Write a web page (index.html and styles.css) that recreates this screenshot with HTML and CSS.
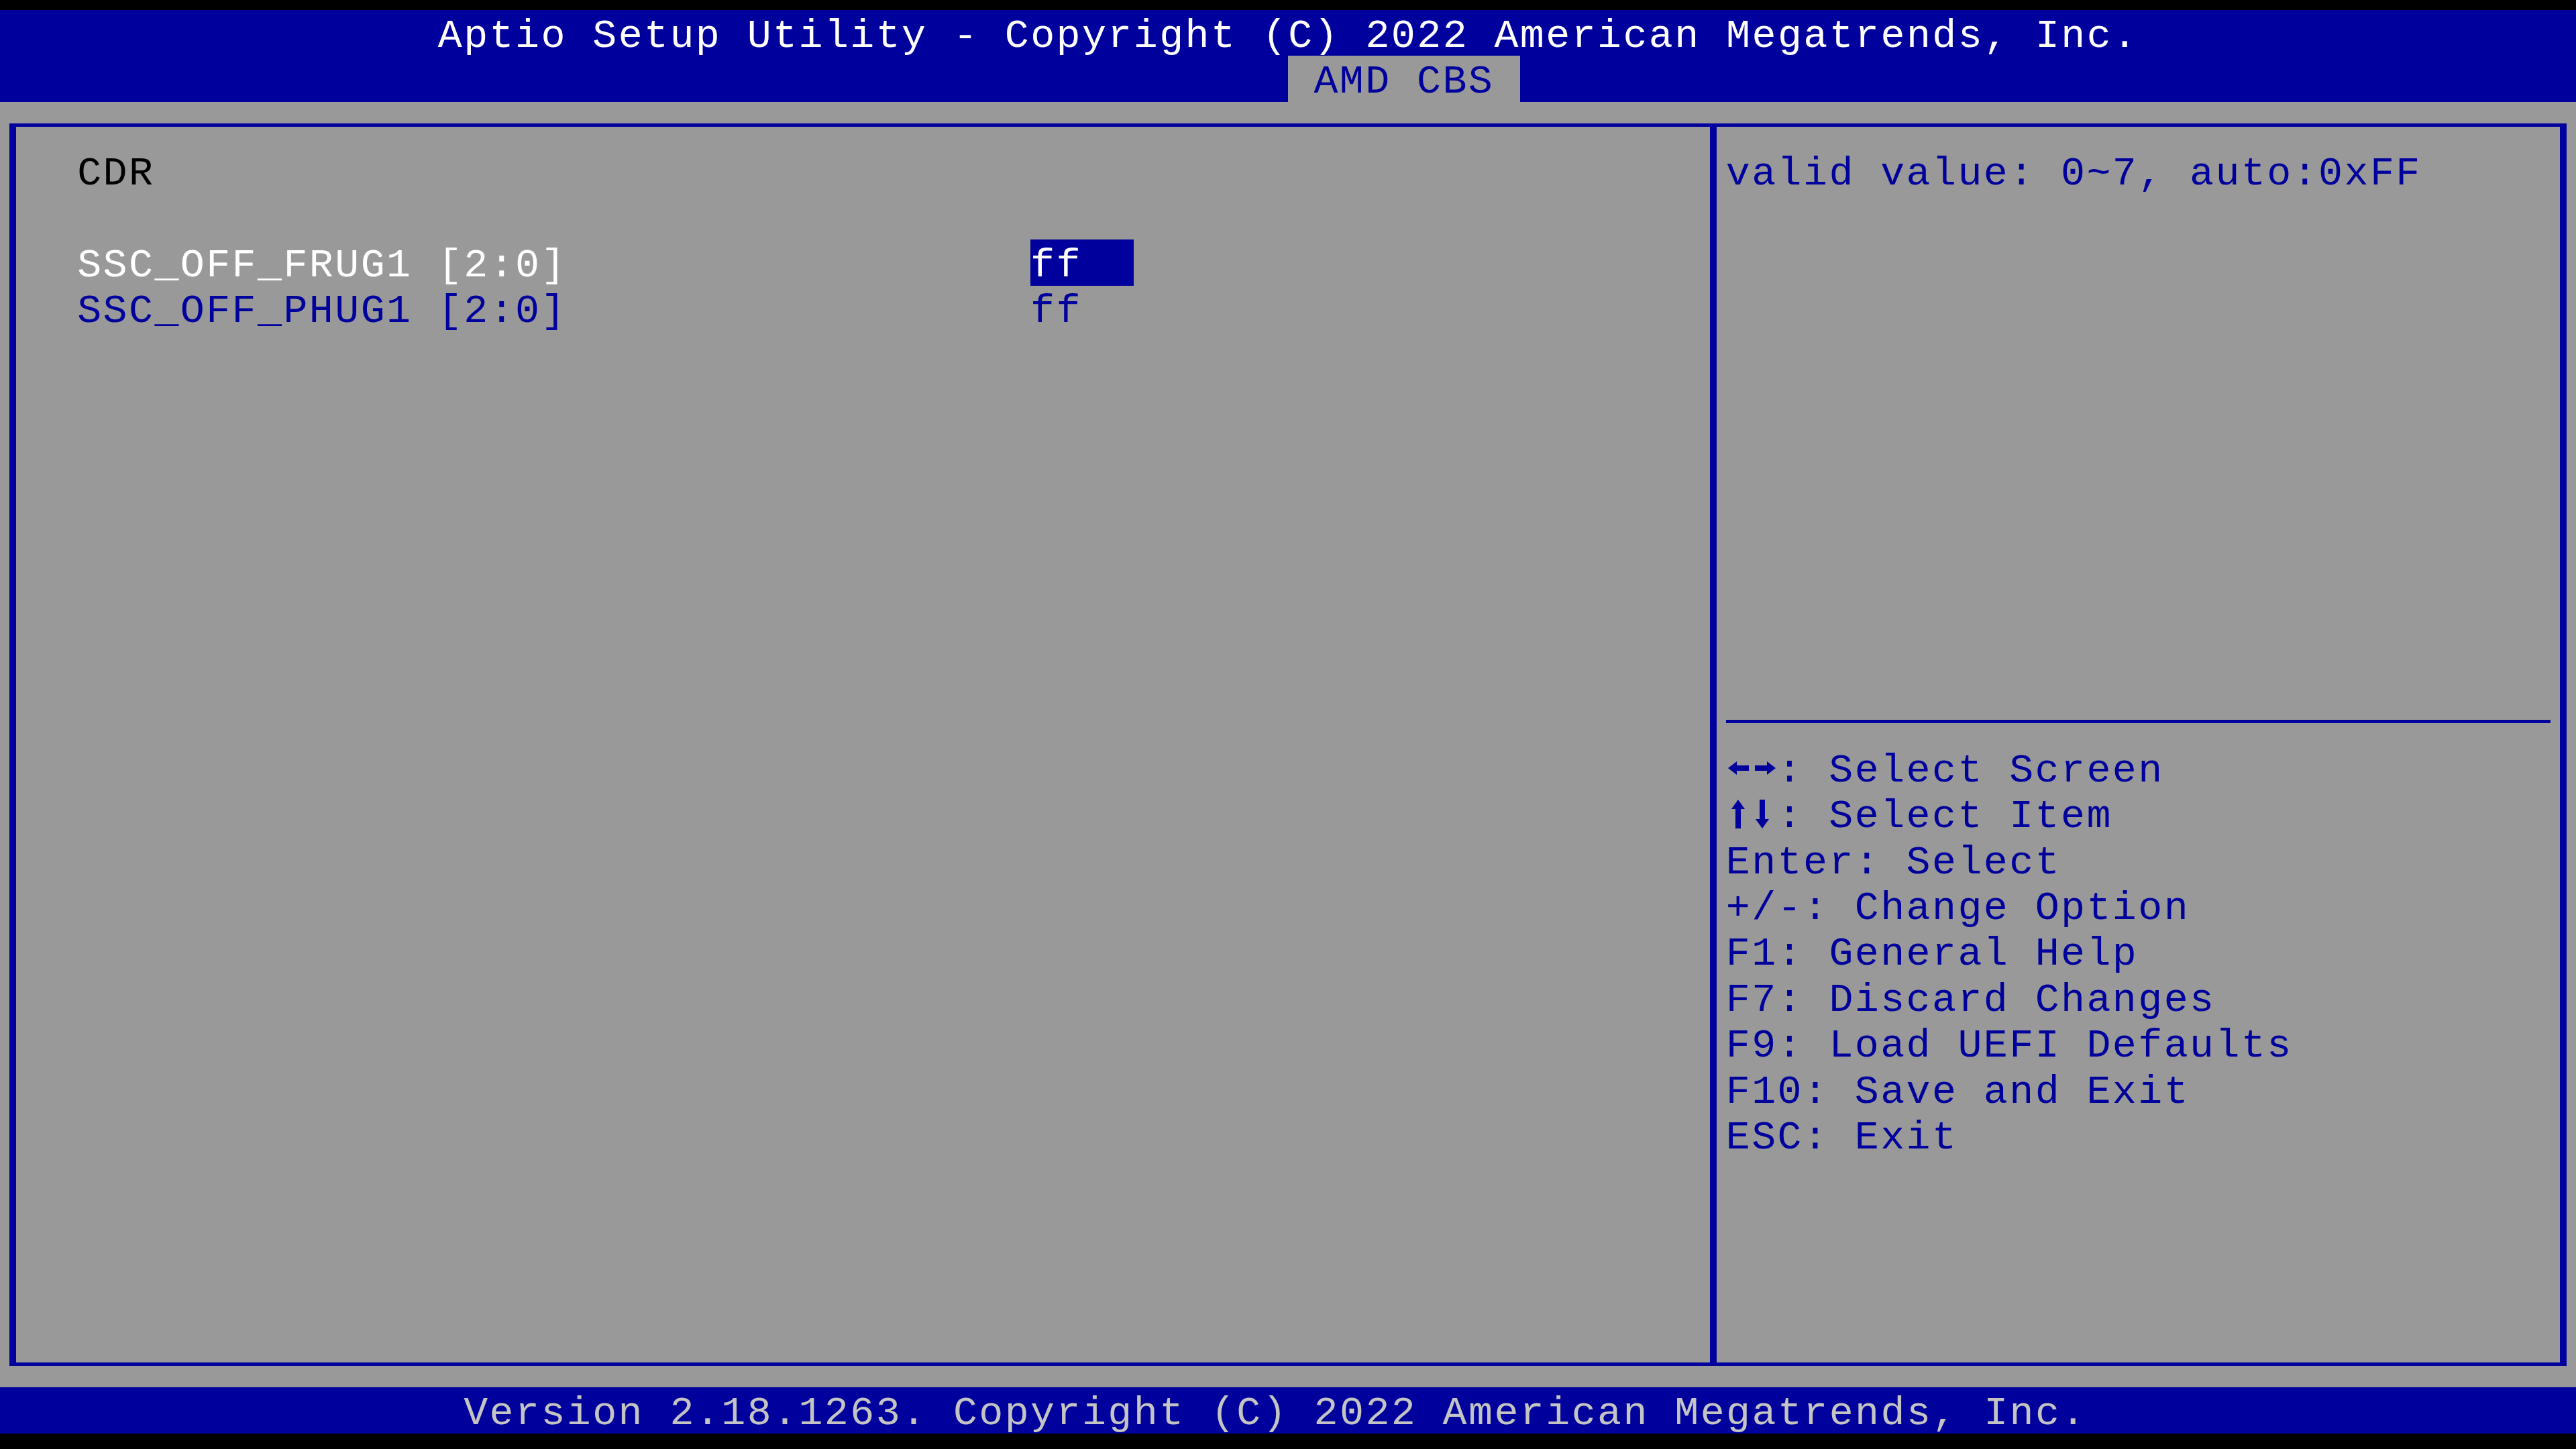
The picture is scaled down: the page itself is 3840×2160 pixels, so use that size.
FILE: index.html
```html
<!DOCTYPE html>
<html lang="en">
<head>
  <meta charset="UTF-8">
  <title>Aptio Setup Utility - AMD CBS</title>
  <link rel="stylesheet" href="styles.css">
</head>
<body>
  <div class="screen">
    <div class="topbar">
      <div class="line title">Aptio Setup Utility - Copyright (C) 2022 American Megatrends, Inc.</div>
      <div class="tabs">
        <div class="line tab">AMD CBS</div>
      </div>
    </div>

    <div class="main">
      <div class="frame">
        <div class="pane-left">
          <div class="line heading">CDR</div>
          <div class="line"></div>
          <div class="item selected">
            <div class="line label">SSC_OFF_FRUG1 [2:0]</div>
            <div class="line value">ff</div>
          </div>
          <div class="item">
            <div class="line label">SSC_OFF_PHUG1 [2:0]</div>
            <div class="line value">ff</div>
          </div>
        </div>

        <div class="pane-right">
          <div class="help">
            <div class="line">valid value: 0~7, auto:0xFF</div>
          </div>
          <div class="separator"></div>
          <div class="keys">
            <div class="line"><svg class="arrow" viewBox="0 0 76.8 60" aria-label="left right"><path d="M3 30 L16 20 L16 26 L34 26 L34 34 L16 34 L16 40 Z M74 30 L61 20 L61 26 L43 26 L43 34 L61 34 L61 40 Z"/></svg>: Select Screen</div>
            <div class="line"><svg class="arrow" viewBox="0 0 76.8 60" aria-label="up down"><path d="M18 9 L8 23 L14 23 L14 52 L22 52 L22 23 L28 23 Z M54 52 L44 38 L50 38 L50 9 L58 9 L58 38 L64 38 Z"/></svg>: Select Item</div>
            <div class="line">Enter: Select</div>
            <div class="line">+/-: Change Option</div>
            <div class="line">F1: General Help</div>
            <div class="line">F7: Discard Changes</div>
            <div class="line">F9: Load UEFI Defaults</div>
            <div class="line">F10: Save and Exit</div>
            <div class="line">ESC: Exit</div>
          </div>
        </div>
      </div>
    </div>

    <div class="footer">
      <div class="line">Version 2.18.1263. Copyright (C) 2022 American Megatrends, Inc.</div>
    </div>
  </div>
</body>
</html>
```

FILE: styles.css
```css
/* text screen: 100 columns x 31 rows */
:root {
  --col: 38.4px;
  --row: 68.45px;
  --blue: #00009c;
  --grey: #999999;
}

* {
  box-sizing: border-box;
}

body {
  margin: 0;
  background: #000;
  font-family: "Liberation Mono", "DejaVu Sans Mono", monospace;
  font-size: 60px;
  letter-spacing: 2.4px;
  overflow: hidden;
}

.screen {
  width: 3840px;
  height: 2160px;
  padding-top: 15px;
}

/* one text row; baseline sits a bit low in the cell */
.line {
  height: var(--row);
  line-height: var(--row);
  padding-top: 4.5px;
  white-space: pre;
}

.topbar {
  background: var(--blue);
}

.title {
  padding-left: calc(17 * var(--col));
  color: #fff;
}

.tabs {
  display: flex;
  padding-left: calc(50 * var(--col));
}

.tab {
  background: var(--grey);
  color: var(--blue);
  padding-left: var(--col);
  padding-right: var(--col);
}

.main {
  background: var(--grey);
  height: calc(28 * var(--row));
  padding: 31.7px 14.2px 0 14.2px;
}

/* box lines are drawn through the middle of the edge cells */
.frame {
  display: grid;
  grid-template-columns: 2524.4px 1fr;
  height: 1852.5px;
  border-top: 5px solid var(--blue);
  border-bottom: 5px solid var(--blue);
  border-left: 10px solid var(--blue);
  border-right: 10px solid var(--blue);
}

.pane-left {
  padding: 31.75px 0 0 91px;
}

.heading {
  color: #000;
}

.item {
  display: grid;
  grid-template-columns: calc(37 * var(--col)) calc(4 * var(--col));
  color: var(--blue);
}

.item.selected .label {
  color: #fff;
}

.item.selected .value {
  background: var(--blue);
  color: #fff;
}

.pane-right {
  border-left: 10px solid var(--blue);
  padding: 31.75px 0 0 14.2px;
  color: var(--blue);
}

.help {
  height: calc(12 * var(--row));
}

.separator {
  height: var(--row);
  width: calc(32 * var(--col));
  display: flex;
  align-items: center;
}

.separator::before {
  content: "";
  display: block;
  width: 100%;
  height: 5px;
  background: var(--blue);
}

/* two-cell arrow glyphs of the key legend */
.arrow {
  display: inline-block;
  vertical-align: top;
  width: calc(2 * var(--col));
  height: 60px;
  fill: var(--blue);
}

.footer {
  background: var(--blue);
  color: #c4c4c4;
  padding-left: calc(18 * var(--col));
}
```
